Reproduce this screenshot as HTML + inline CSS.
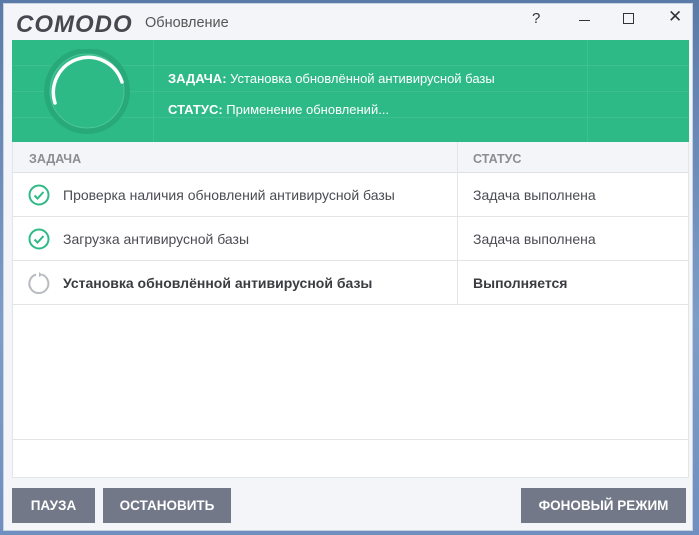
<!DOCTYPE html><html><head><meta charset="utf-8"><style>
*{margin:0;padding:0;box-sizing:border-box}
body{width:699px;height:535px;background:linear-gradient(180deg,#5a7aa8,#7d9cc8 60%,#6e8fbf);font-family:"Liberation Sans","DejaVu Sans",sans-serif;position:relative;overflow:hidden}
.win{position:absolute;left:3px;top:3px;width:690px;height:528px;background:#f3f5f8;border:1px solid #c9d2de}
.abs{position:absolute}
.logo{left:12px;top:7px;font-size:24px;font-weight:bold;font-style:italic;color:#45484f;letter-spacing:1px}
.title{left:141px;top:11px;font-size:14.5px;color:#555}
.green{left:8px;top:36px;width:677px;height:102px;background:#2dba87}
.gl{position:absolute;background:rgba(255,255,255,.08)}
.ht{color:#fff;font-size:13px}
.table{left:8px;top:138px;width:677px;height:336px;background:#fff;border:1px solid #e2e5ea;border-top:none}
.hdr{position:absolute;left:0;top:0;width:100%;height:31px;background:#f3f5f8;border-bottom:1px solid #dde0e5;font-size:12.5px;color:#8a8d93;font-weight:bold}
.row{position:absolute;left:0;width:100%;height:44px;border-bottom:1px solid #e2e4e8;font-size:14px;color:#4a4c52}
.vl{position:absolute;left:444px;top:0;width:1px;height:163px;background:#e2e4e8}
.btn{position:absolute;top:484px;height:35px;background:#727887;color:#fff;font-weight:bold;font-size:13.5px;text-align:center;line-height:35px}
</style></head><body><div class="win">
<div class="abs logo">COMODO</div>
<div class="abs title">Обновление</div>
<div class="abs" style="left:528px;top:6px;font-size:15px;color:#333">?</div>
<div class="abs" style="left:575px;top:16px;width:11px;height:1px;background:#333"></div>
<div class="abs" style="left:619px;top:9px;width:11px;height:11px;border:1px solid #333"></div>
<div class="abs" style="left:664px;top:3px;font-size:17px;color:#333">✕</div>
<div class="abs green">
<div class="gl" style="left:141px;top:0;width:1px;height:102px"></div>
<div class="gl" style="left:575px;top:0;width:1px;height:102px"></div>
<div class="gl" style="left:0;top:25px;width:677px;height:1px"></div>
<div class="gl" style="left:0;top:51px;width:677px;height:1px"></div>
<div class="gl" style="left:0;top:77px;width:677px;height:1px"></div>
<svg class="abs" style="left:32px;top:9px" width="86" height="86"><circle cx="43" cy="42" r="43" fill="#28a97a"/><circle cx="43" cy="42" r="37" fill="#2dba87" stroke="#4cc699" stroke-width="1"/><path d="M11 54 A34 34 0 0 1 78 33" fill="none" stroke="#fff" stroke-width="3.5" stroke-linecap="round"/></svg>
<div class="abs ht" style="left:156px;top:31px"><b>ЗАДАЧА:</b> Установка обновлённой антивирусной базы</div>
<div class="abs ht" style="left:156px;top:62px"><b>СТАТУС:</b> Применение обновлений...</div>
</div>
<div class="abs table">
<div class="hdr"><span class="abs" style="left:16px;top:10px">ЗАДАЧА</span><span class="abs" style="left:460px;top:10px">СТАТУС</span></div>
<div class="row" style="top:31px"><svg class="abs" style="left:15px;top:11px" width="22" height="22"><circle cx="11" cy="11" r="9.5" fill="none" stroke="#2dba87" stroke-width="2"/><path d="M6.5 11.5l3 3 6-6.5" fill="none" stroke="#2dba87" stroke-width="2"/></svg><span class="abs" style="left:50px;top:14px">Проверка наличия обновлений антивирусной базы</span><span class="abs" style="left:460px;top:14px">Задача выполнена</span></div>
<div class="row" style="top:75px"><svg class="abs" style="left:15px;top:11px" width="22" height="22"><circle cx="11" cy="11" r="9.5" fill="none" stroke="#2dba87" stroke-width="2"/><path d="M6.5 11.5l3 3 6-6.5" fill="none" stroke="#2dba87" stroke-width="2"/></svg><span class="abs" style="left:50px;top:14px">Загрузка антивирусной базы</span><span class="abs" style="left:460px;top:14px">Задача выполнена</span></div>
<div class="row" style="top:119px;font-weight:bold;color:#3a3c40"><svg class="abs" style="left:15px;top:11px" width="22" height="22"><path d="M14 2.6A9.5 9.5 0 1 1 8 2.5" fill="none" stroke="#b8bbc0" stroke-width="2"/><path d="M11 0l3.5 2.8-3.5 2.5z" fill="#b8bbc0"/></svg><span class="abs" style="left:50px;top:14px">Установка обновлённой антивирусной базы</span><span class="abs" style="left:460px;top:14px">Выполняется</span></div>
<div class="vl"></div>
<div class="abs" style="left:0;top:297px;width:100%;height:1px;background:#e2e4e8"></div>
</div>
<div class="btn" style="left:8px;width:83px">ПАУЗА</div>
<div class="btn" style="left:99px;width:128px">ОСТАНОВИТЬ</div>
<div class="btn" style="left:517px;width:165px">ФОНОВЫЙ РЕЖИМ</div>
</div></body></html>
